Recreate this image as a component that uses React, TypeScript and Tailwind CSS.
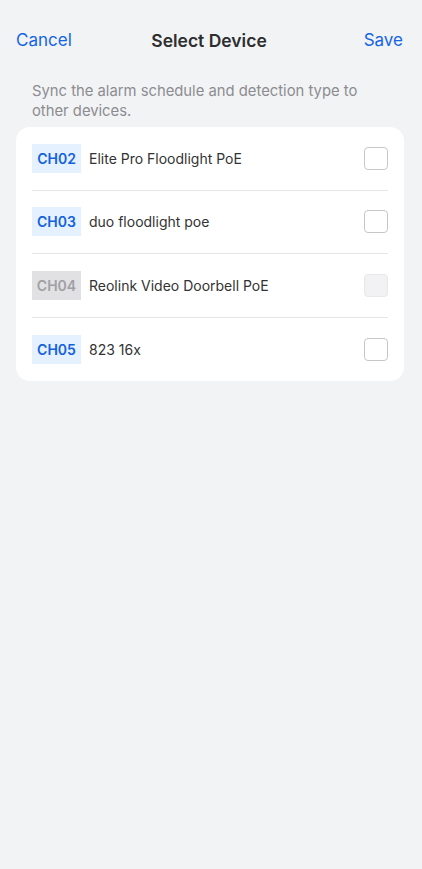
import React from "react";

const rows = [
  { ch: "CH02", name: "Elite Pro Floodlight PoE", disabled: false },
  { ch: "CH03", name: "duo floodlight poe", disabled: false },
  { ch: "CH04", name: "Reolink Video Doorbell PoE", disabled: true },
  { ch: "CH05", name: "823 16x", disabled: false },
];

export default function App() {
  return (
    <div
      className="w-[422px] h-[869px] bg-[#f2f3f5] overflow-hidden"
      style={{ fontFamily: "Inter, 'Noto Sans', sans-serif" }}
    >
      <div className="relative flex items-center justify-between h-[80px] pt-[2px] pl-4 pr-[19px]">
        <span className="text-[17px] text-[#1464e6]">Cancel</span>
        <span className="absolute left-0 right-[4px] text-center text-[17.5px] font-semibold text-[#2e2e2e] pointer-events-none">
          Select Device
        </span>
        <span className="text-[17px] text-[#1464e6]">Save</span>
      </div>
      <p className="pl-8 pr-6 text-[14.8px] leading-[20px] text-[#8c8c90] pt-[1px]">
        Sync the alarm schedule and detection type to other devices.
      </p>
      <div className="ml-4 w-[388px] mt-[6px] bg-white rounded-[14px] px-4">
        {rows.map((r, i) => (
          <div
            key={r.ch}
            className={`flex items-center h-[63.5px] ${
              i < rows.length - 1 ? "border-b border-[#e6e6e8]" : ""
            }`}
          >
            <span
              className={`w-[49px] h-[29px] flex items-center justify-center text-[14px] font-semibold ${
                r.disabled
                  ? "bg-[#e1e1e3] text-[#a0a0a3]"
                  : "bg-[#e6f1ff] text-[#1461dc]"
              }`}
            >
              {r.ch}
            </span>
            <span className="ml-2 flex-1 text-[14px] text-[#333333]">{r.name}</span>
            <span
              className={`w-[24px] h-[23px] rounded-[4px] border-[1.5px] ${
                r.disabled
                  ? "border-[#e8e8ea] bg-[#f2f2f4]"
                  : "border-[#c7c7c9] bg-white"
              }`}
            />
          </div>
        ))}
      </div>
    </div>
  );
}
